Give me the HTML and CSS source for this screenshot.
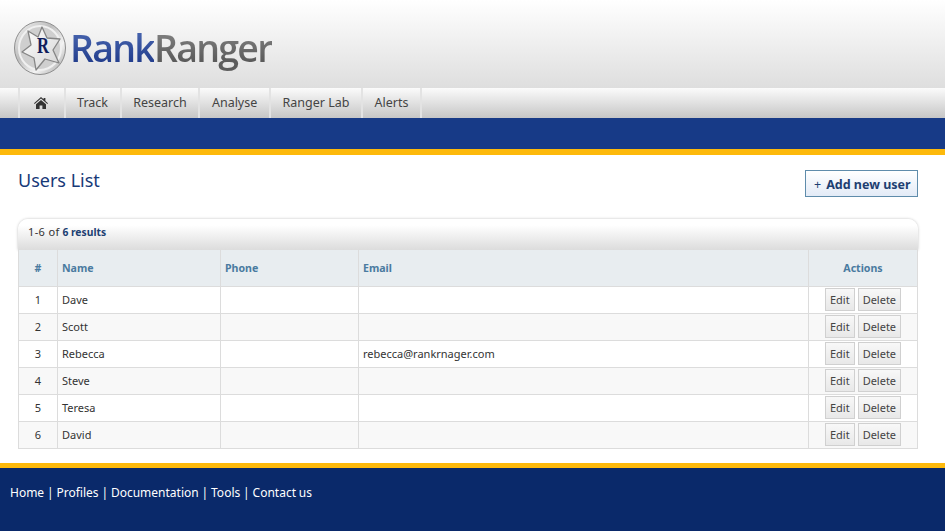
FILE: index.html
```html
<!DOCTYPE html>
<html lang="en">
<head>
<meta charset="utf-8">
<title>Users List</title>
<link rel="stylesheet" href="styles.css">
</head>
<body>
<header class="masthead">
  <div class="logo">
    <svg class="badge" width="54" height="56" viewBox="0 0 54 56">
      <defs>
        <linearGradient id="disc" x1="0" y1="0" x2="1" y2="1">
          <stop offset="0" stop-color="#f7f7f7"/>
          <stop offset="0.4" stop-color="#bdbdbd"/>
          <stop offset="0.68" stop-color="#f4f4f4"/>
          <stop offset="1" stop-color="#989898"/>
        </linearGradient>
        <linearGradient id="star" x1="0" y1="0" x2="1" y2="1">
          <stop offset="0" stop-color="#ffffff"/>
          <stop offset="1" stop-color="#d4d4d4"/>
        </linearGradient>
      </defs>
      <ellipse cx="27" cy="28" rx="25.5" ry="26.5" fill="url(#disc)" stroke="#8e8e8e"/>
      <ellipse cx="27" cy="28" rx="21" ry="22" fill="#cfcfcf" stroke="#f0f0f0" stroke-width="2"/>
      <path d="M29 7 L34 18 L47 19 L40 30 L46 43 L32 39 L23 50 L21 38 L9 32 L18 25 L15 11 L25 17 Z" fill="url(#star)" stroke="#858585" stroke-width="1.3" stroke-linejoin="round"/>
      <text x="30" y="33" text-anchor="middle" textLength="12" lengthAdjust="spacingAndGlyphs" class="badge-r">R</text>
    </svg>
    <span class="wordmark"><span class="rank">Rank</span><span class="ranger">Ranger</span></span>
  </div>
</header>
<nav class="nav">
  <ul class="nav-list">
    <li class="nav-item nav-home">
      <svg width="14" height="12" viewBox="0 0 14 12"><path fill="#333" d="M7 0 L9.6 2.3 V1 H11.4 V3.9 L14 6.2 L13.3 7 L7 1.6 L.7 7 L0 6.2 Z M2 7.2 L7 3 L12 7.2 V12 H8.4 V8.5 H5.6 V12 H2 Z"/></svg>
    </li>
    <li class="nav-item">Track</li>
    <li class="nav-item">Research</li>
    <li class="nav-item">Analyse</li>
    <li class="nav-item">Ranger Lab</li>
    <li class="nav-item">Alerts</li>
  </ul>
</nav>
<div class="band"></div>
<main class="content">
  <div class="title-row">
    <h1 class="title">Users List</h1>
    <a class="add-btn"><span class="plus">+</span>Add new user</a>
  </div>
  <div class="results-bar"><span class="range">1-6 of</span> <b>6 results</b></div>
  <table class="users">
    <thead>
      <tr><th class="c-num">#</th><th class="c-name">Name</th><th class="c-phone">Phone</th><th class="c-email">Email</th><th class="c-actions">Actions</th></tr>
    </thead>
    <tbody>
      <tr><td class="c-num">1</td><td>Dave</td><td></td><td></td><td class="c-actions"><span class="btn">Edit</span><span class="btn">Delete</span></td></tr>
      <tr><td class="c-num">2</td><td>Scott</td><td></td><td></td><td class="c-actions"><span class="btn">Edit</span><span class="btn">Delete</span></td></tr>
      <tr><td class="c-num">3</td><td>Rebecca</td><td></td><td>rebecca@rankrnager.com</td><td class="c-actions"><span class="btn">Edit</span><span class="btn">Delete</span></td></tr>
      <tr><td class="c-num">4</td><td>Steve</td><td></td><td></td><td class="c-actions"><span class="btn">Edit</span><span class="btn">Delete</span></td></tr>
      <tr><td class="c-num">5</td><td>Teresa</td><td></td><td></td><td class="c-actions"><span class="btn">Edit</span><span class="btn">Delete</span></td></tr>
      <tr><td class="c-num">6</td><td>David</td><td></td><td></td><td class="c-actions"><span class="btn">Edit</span><span class="btn">Delete</span></td></tr>
    </tbody>
  </table>
</main>
<footer class="footer">
  <p class="footer-links">Home | Profiles | Documentation | Tools | Contact us</p>
</footer>
</body>
</html>
```
FILE: styles.css
```css
* { box-sizing: border-box; }
html, body { margin: 0; padding: 0; }
body {
  width: 945px;
  height: 531px;
  overflow: hidden;
  background: #fff;
  font-family: "Noto Sans", "Open Sans", sans-serif;
  color: #333;
}
.masthead {
  height: 88px;
  padding: 20px 0 0 13px;
  background: linear-gradient(#ffffff 0%, #dedede 100%);
}
.logo { display: flex; align-items: flex-start; }
.badge { flex: none; display: block; }
.badge-r {
  font-family: "Liberation Serif", serif;
  font-weight: 700;
  font-size: 23px;
  fill: #101c5c;
}
.wordmark {
  margin: 3px 0 0 3px;
  font-family: "Open Sans", sans-serif;
  font-weight: 600;
  font-size: 37.5px;
  line-height: 50px;
  letter-spacing: -1.75px;
}
.rank {
  color: transparent;
  background: linear-gradient(#4461ab 25%, #25408f 75%);
  -webkit-background-clip: text;
  background-clip: text;
}
.ranger {
  color: transparent;
  background: linear-gradient(#7d7d7d 25%, #5c5c5c 75%);
  -webkit-background-clip: text;
  background-clip: text;
}
.nav { height: 30px; background: linear-gradient(#fbfbfb, #c6c6c6); }
.nav-list {
  display: flex;
  list-style: none;
  height: 30px;
  margin: 0;
  padding: 0 0 0 18px;
}
.nav-item {
  display: flex;
  align-items: center;
  padding: 0 11.6px 2px 11.6px;
  border-left: 2px solid #e3e3e3;
  font-size: 12.5px;
  color: #444;
}
.nav-item:last-child { border-right: 2px solid #e3e3e3; }
.nav-home { width: 45.5px; padding: 0 2px 1px 0; justify-content: center; }
.band {
  height: 37px;
  background: #173a87;
  border-bottom: 6px solid #fdb90b;
}
.content { padding: 14px 27px 0 18px; height: 308px; }
.title-row {
  display: flex;
  justify-content: space-between;
  height: 50px;
}
.title {
  margin: 0;
  font-size: 18px;
  font-weight: 400;
  line-height: 22px;
  color: #173a78;
}
.add-btn {
  display: block;
  margin-top: 1px;
  padding-left: 8px;
  width: 113px;
  height: 27px;
  font-size: 12.5px;
  font-weight: 700;
  line-height: 27px;
  color: #1d3f72;
  border: 1px solid #5f8cab;
  background: linear-gradient(#ffffff, #e3ebf7);
}
.plus { font-weight: 400; margin-right: 5px; }
.results-bar {
  height: 31px;
  padding-left: 10px;
  font-size: 11px;
  line-height: 26px;
  color: #333;
  border-radius: 10px 10px 0 0;
  background: linear-gradient(#ffffff 20%, #dcdcdc 100%);
  box-shadow: 0 0 3px #c0c0c0;
}
.range { letter-spacing: 0.35px; }
.results-bar b { color: #1d3f72; font-size: 10.3px; }
.users {
  width: 900px;
  border-collapse: collapse;
  table-layout: fixed;
  font-size: 11px;
}
.users th, .users td {
  border: 1px solid #dcdcdc;
  padding: 0 4px;
  text-align: left;
  font-weight: 400;
  color: #333;
}
.users th {
  height: 36px;
  background: #e8edf0;
  font-size: 10.6px;
  font-weight: 700;
  color: #4a7ba0;
  border-top: 0;
}
.users td { height: 27px; background: #fff; }
.users tbody tr:nth-child(even) td { background: #f8f8f8; }
.users .c-num { width: 39px; text-align: center; }
.users .c-name { width: 163px; }
.users .c-phone { width: 138px; }
.users .c-email { width: 450px; }
.users .c-actions { text-align: center; padding: 0; white-space: nowrap; }
.btn {
  display: inline-block;
  height: 23px;
  line-height: 21px;
  padding: 0 4px;
  margin-right: 3px;
  font-size: 11px;
  color: #444;
  border: 1px solid #d0d0d0;
  background: linear-gradient(#f8f8f8, #e8e8e8);
}
.btn:last-child { margin-right: 0; }
.footer {
  height: 68px;
  background: #0a296a;
  border-top: 5px solid #fdb90b;
}
.footer-links {
  margin: 0;
  padding: 16px 0 0 10px;
  font-size: 12px;
  line-height: 17px;
  word-spacing: -0.25px;
  color: #fff;
}
```
